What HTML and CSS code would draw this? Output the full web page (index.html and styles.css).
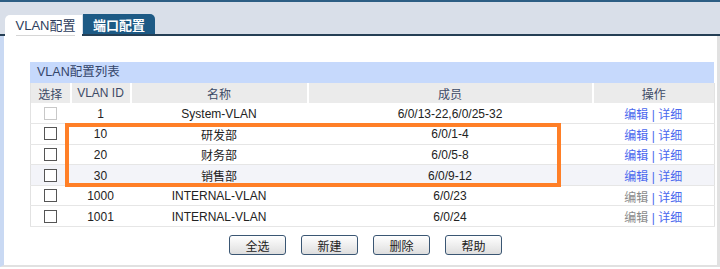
FILE: index.html
```html
<!DOCTYPE html>
<html lang="zh-cn">
<head>
    <meta charset="UTF-8">
    <title>VLAN配置</title>
    <link rel="stylesheet" href="styles.css">
</head>
<body>

    <div class="tabbar">
        <div class="tab tab-active"><span>VLAN配置</span></div>
        <div class="tab tab-dark">端口配置</div>
    </div>

    <div class="panel">
        <div class="list">
            <div class="list-title">VLAN配置列表</div>
            <table>
                <colgroup>
                    <col class="c-sel">
                    <col class="c-id">
                    <col class="c-name">
                    <col class="c-mem">
                    <col class="c-op">
                </colgroup>
                <thead>
                    <tr>
                        <th>选择</th>
                        <th>VLAN ID</th>
                        <th>名称</th>
                        <th>成员</th>
                        <th>操作</th>
                    </tr>
                </thead>
                <tbody>
                    <tr>
                        <td><span class="chk chk-off"></span></td>
                        <td>1</td>
                        <td>System-VLAN</td>
                        <td>6/0/13-22,6/0/25-32</td>
                        <td><a>编辑</a> | <a>详细</a></td>
                    </tr>
                    <tr>
                        <td><span class="chk"></span></td>
                        <td>10</td>
                        <td>研发部</td>
                        <td>6/0/1-4</td>
                        <td><a>编辑</a> | <a>详细</a></td>
                    </tr>
                    <tr>
                        <td><span class="chk"></span></td>
                        <td>20</td>
                        <td>财务部</td>
                        <td>6/0/5-8</td>
                        <td><a>编辑</a> | <a>详细</a></td>
                    </tr>
                    <tr class="shade">
                        <td><span class="chk"></span></td>
                        <td>30</td>
                        <td>销售部</td>
                        <td>6/0/9-12</td>
                        <td><a>编辑</a> | <a>详细</a></td>
                    </tr>
                    <tr>
                        <td><span class="chk"></span></td>
                        <td>1000</td>
                        <td>INTERNAL-VLAN</td>
                        <td>6/0/23</td>
                        <td><a class="off">编辑</a> | <a>详细</a></td>
                    </tr>
                    <tr>
                        <td><span class="chk"></span></td>
                        <td>1001</td>
                        <td>INTERNAL-VLAN</td>
                        <td>6/0/24</td>
                        <td><a class="off">编辑</a> | <a>详细</a></td>
                    </tr>
                </tbody>
            </table>
            <!-- highlight box around the department vlans -->
            <div class="mark"></div>
        </div>

        <div class="buttons">
            <button>全选</button>
            <button>新建</button>
            <button>删除</button>
            <button>帮助</button>
        </div>
    </div>

</body>
</html>
```

FILE: styles.css
```css
* {
    margin: 0;
    padding: 0;
    box-sizing: border-box;
}

body {
    width: 720px;
    height: 269px;
    background-color: #fff;
    font-family: "Liberation Sans", "Noto Sans CJK SC", sans-serif;
    font-size: 12px;
    color: #222;
    overflow: hidden;
}

.tabbar {
    display: flex;
    align-items: flex-end;
    height: 36px;
    padding-left: 5px;
    background-color: #d9dfe9;
    border-top: 2px solid #2d5e84;
    border-bottom: 2px solid #253f55;
}

.tab {
    display: flex;
    align-items: center;
    justify-content: center;
    height: 20px;
    font-size: 13px;
}

.tab-active {
    width: 77px;
    height: 21px;
    margin-bottom: -2px;
    padding-left: 4px;
    background-color: #fff;
    border-radius: 5px 0 0 0;
    color: #2d3d5c;
}

.tab-active span {
    padding-bottom: 1px;
    border-bottom: 1px solid #d6d6d6;
}

.tab-dark {
    width: 72px;
    margin-left: 1px;
    background-color: #1d5a85;
    border-radius: 0 5px 0 0;
    color: #fff;
    font-weight: bold;
}

.panel {
    height: 231px;
    padding: 26px 3px 0 26px;
    border-left: 4px solid #c9d9f3;
    border-right: 3px solid #e1e1e1;
    border-bottom: 2px solid #e1e1e1;
}

.list {
    position: relative;
    width: 684px;
}

.list-title {
    height: 21px;
    padding-left: 7px;
    line-height: 21px;
    background-color: #c6d9fc;
    color: #34456a;
    font-size: 12.5px;
}

table {
    width: 684px;
    border-collapse: collapse;
    table-layout: fixed;
    border-left: 1px solid #e2e2e2;
    border-right: 1px solid #e2e2e2;
}

.c-sel { width: 40px; }
.c-id { width: 60px; }
.c-name { width: 177px; }
.c-mem { width: 285px; }
.c-op { width: 122px; }

th {
    height: 20px;
    font-weight: normal;
    color: #3d4a66;
    background-color: #ebebeb;
    border-left: 2px solid #fff;
}

th:first-child {
    border-left: none;
}

td {
    height: 20.6px;
    text-align: center;
    border-bottom: 1px solid #e6e6e6;
    padding-top: 1px;
}

.shade td {
    background-color: #f3f4f9;
}

.chk {
    display: inline-block;
    width: 13px;
    height: 13px;
    margin-top: 2px;
    border: 1px solid #555;
    background-color: #fff;
}

.chk-off {
    border-color: #c8c8c8;
}

td a {
    color: #4a68ee;
}

td a.off {
    color: #8a8a8a;
}

td:last-child {
    color: #4a68ee;
}

.mark {
    position: absolute;
    left: 35px;
    top: 61px;
    width: 496px;
    height: 64px;
    border: 4px solid #ff7f27;
}

.buttons {
    display: flex;
    gap: 15px;
    padding-left: 199px;
    margin-top: 8px;
}

button {
    width: 57px;
    height: 20px;
    border: 1px solid #3a5673;
    border-radius: 3px;
    background: linear-gradient(#ffffff, #dedede);
    font-family: "Liberation Sans", "Noto Sans CJK SC", sans-serif;
    font-size: 12px;
    color: #222;
}
```
